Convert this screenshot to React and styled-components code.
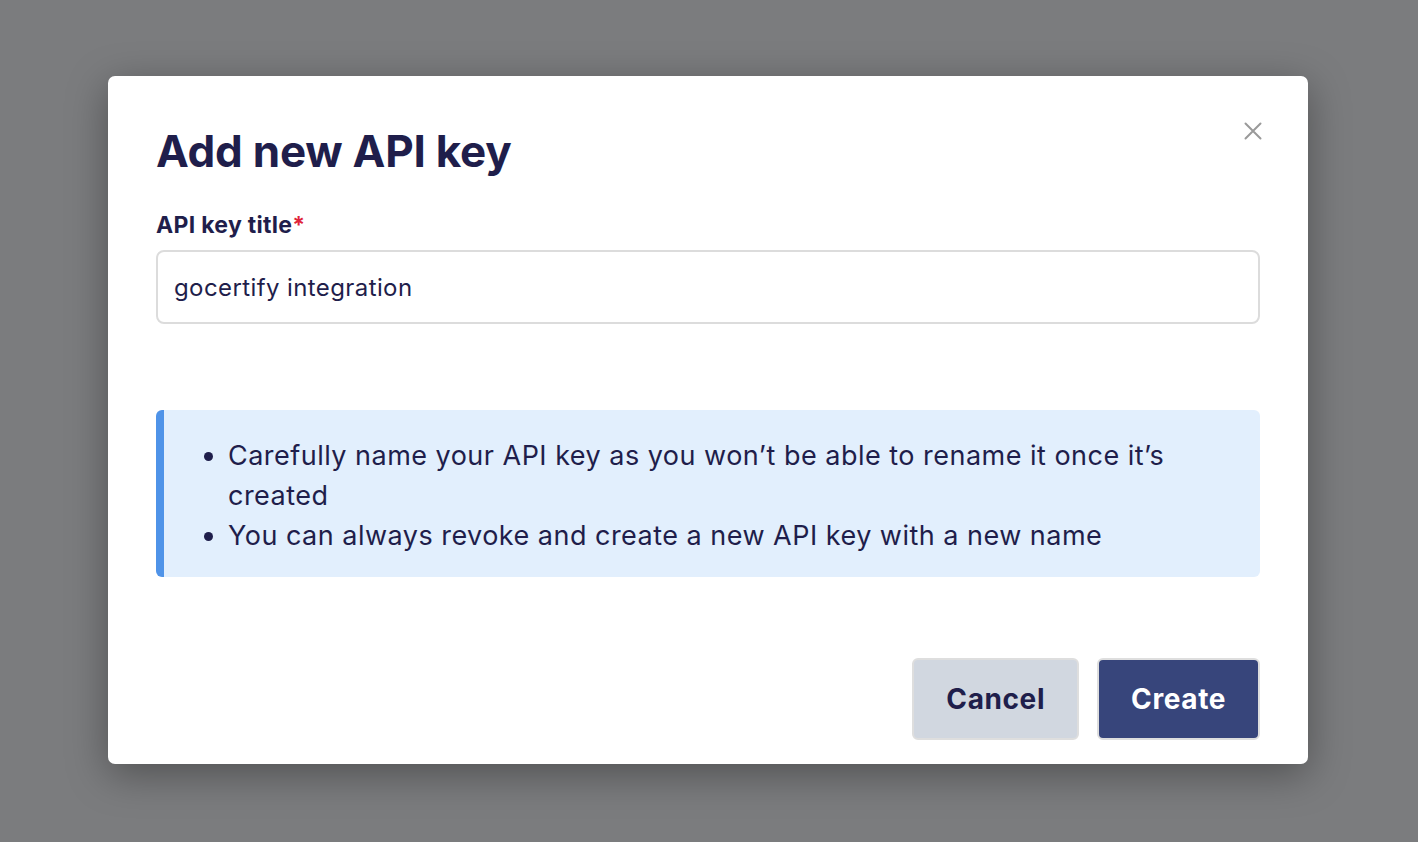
import React, { useState } from 'react';
import styled, { createGlobalStyle } from 'styled-components';

const GlobalStyle = createGlobalStyle`
  html, body {
    margin: 0;
    padding: 0;
    height: 100%;
  }
  body {
    background: #7b7c7e;
    font-family: Inter, "Noto Sans", "Liberation Sans", sans-serif;
    color: #1f1e4b;
  }
`;

const Overlay = styled.div`
  width: 1418px;
  height: 842px;
  background: #7b7c7e;
  display: flex;
  align-items: flex-start;
  padding: 76px 0 0 108px;
  box-sizing: border-box;
`;

const Modal = styled.div`
  position: relative;
  width: 1200px;
  height: 688px;
  box-sizing: border-box;
  background: #fff;
  border-radius: 7px;
  box-shadow: 0 10px 40px rgba(0, 0, 0, 0.35);
  padding: 40px 48px 24px 48px;
  display: flex;
  flex-direction: column;
`;

const CloseButton = styled.button`
  position: absolute;
  top: 44px;
  right: 44px;
  width: 22px;
  height: 22px;
  padding: 0;
  border: none;
  background: none;
  cursor: pointer;
  color: #9a9a9a;
  display: flex;
  align-items: center;
  justify-content: center;
`;

const Title = styled.h1`
  margin: 0;
  font-size: 44px;
  font-weight: 700;
  line-height: 70px;
  letter-spacing: -0.25px;
  color: #1f1e4b;
`;

const Label = styled.label`
  display: block;
  margin-top: 24px;
  font-size: 23px;
  font-weight: 700;
  line-height: 30px;
  letter-spacing: 0.3px;
  color: #1f1e4b;
`;

const Required = styled.span`
  color: #e0243a;
`;

const TextInput = styled.input`
  display: block;
  margin-top: 10px;
  width: 100%;
  height: 74px;
  box-sizing: border-box;
  border: 2px solid #dcdcdc;
  border-radius: 8px;
  padding: 0 16px;
  font-family: inherit;
  font-size: 24px;
  letter-spacing: 0.4px;
  color: #1f1e4b;
  outline: none;
`;

const InfoBox = styled.div`
  margin-top: 86px;
  background: #e2effd;
  border-left: 8px solid #4f93e8;
  border-radius: 6px;
  padding: 26px 60px 21px 0;
`;

const InfoList = styled.ul`
  margin: 0;
  padding-left: 64px;
  font-size: 27px;
  line-height: 40px;
  letter-spacing: 0.48px;
  color: #1f1e4b;
`;

const Footer = styled.div`
  margin-top: auto;
  display: flex;
  justify-content: flex-end;
  gap: 18px;
`;

const Button = styled.button`
  height: 82px;
  padding: 0 32px;
  box-sizing: border-box;
  border: 2px solid #dedede;
  border-radius: 6px;
  font-family: inherit;
  font-size: 28px;
  font-weight: 700;
  letter-spacing: 0.6px;
  cursor: pointer;
  background: ${(p) => (p.$primary ? '#37457b' : '#d1d7e0')};
  color: ${(p) => (p.$primary ? '#ffffff' : '#1f1e4b')};
`;

function CloseIcon() {
  return (
    <svg width="18" height="18" viewBox="0 0 18 18" fill="none">
      <path d="M1.5 1.5L16.5 16.5M16.5 1.5L1.5 16.5" stroke="currentColor" strokeWidth="2" strokeLinecap="round" />
    </svg>
  );
}

export default function App() {
  const [title, setTitle] = useState('gocertify integration');

  return (
    <>
      <GlobalStyle />
      <Overlay>
        <Modal>
          <CloseButton aria-label="Close">
            <CloseIcon />
          </CloseButton>
          <Title>Add new API key</Title>
          <Label htmlFor="apiKeyTitle">
            API key title<Required>*</Required>
          </Label>
          <TextInput
            id="apiKeyTitle"
            type="text"
            value={title}
            onChange={(e) => setTitle(e.target.value)}
          />
          <InfoBox>
            <InfoList>
              <li>Carefully name your API key as you won’t be able to rename it once it’s created</li>
              <li>You can always revoke and create a new API key with a new name</li>
            </InfoList>
          </InfoBox>
          <Footer>
            <Button>Cancel</Button>
            <Button $primary>Create</Button>
          </Footer>
        </Modal>
      </Overlay>
    </>
  );
}
